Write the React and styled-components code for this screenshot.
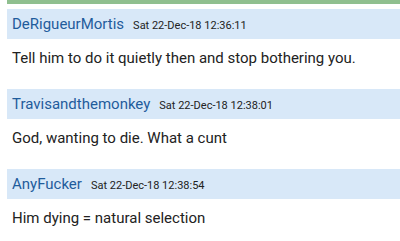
import React from 'react'
import styled, { createGlobalStyle } from 'styled-components'

const GlobalStyle = createGlobalStyle`
  body {
    margin: 0;
    background: #ffffff;
    font-family: Roboto, "Liberation Sans", sans-serif;
  }
`

const posts = [
  { user: 'DeRigueurMortis', date: 'Sat 22-Dec-18 12:36:11', text: 'Tell him to do it quietly then and stop bothering you.' },
  { user: 'Travisandthemonkey', date: 'Sat 22-Dec-18 12:38:01', text: 'God, wanting to die. What a cunt' },
  { user: 'AnyFucker', date: 'Sat 22-Dec-18 12:38:54', text: 'Him dying = natural selection' },
]

const Thread = () => {
  return (
    <Wrapper>
      <GlobalStyle />
      <TopBar />
      {posts.map((p) => (
        <Post key={p.date}>
          <Header>
            <User>{p.user}</User>
            <Stamp>{p.date}</Stamp>
          </Header>
          <Body>{p.text}</Body>
        </Post>
      ))}
    </Wrapper>
  )
}

const Wrapper = styled.div`
  padding-left: 7px;
  width: 393px;
  height: 241px;
  overflow: hidden;
`
const TopBar = styled.div`
  height: 4px;
  background: #8fbf8f;
  margin-bottom: 5px;
`
const Post = styled.div`
  height: 80px;
`
const Header = styled.div`
  display: flex;
  align-items: baseline;
  gap: 9px;
  height: 30px;
  padding: 0 5px;
  background: #d8e8f8;
  line-height: 30px;
`
const User = styled.span`
  font-size: 15px;
  color: #1f5c9c;
`
const Stamp = styled.span`
  font-size: 11px;
  color: #222;
`
const Body = styled.p`
  margin: 0;
  padding: 10px 5px 0;
  font-size: 15px;
  color: #222;
`

export default Thread
